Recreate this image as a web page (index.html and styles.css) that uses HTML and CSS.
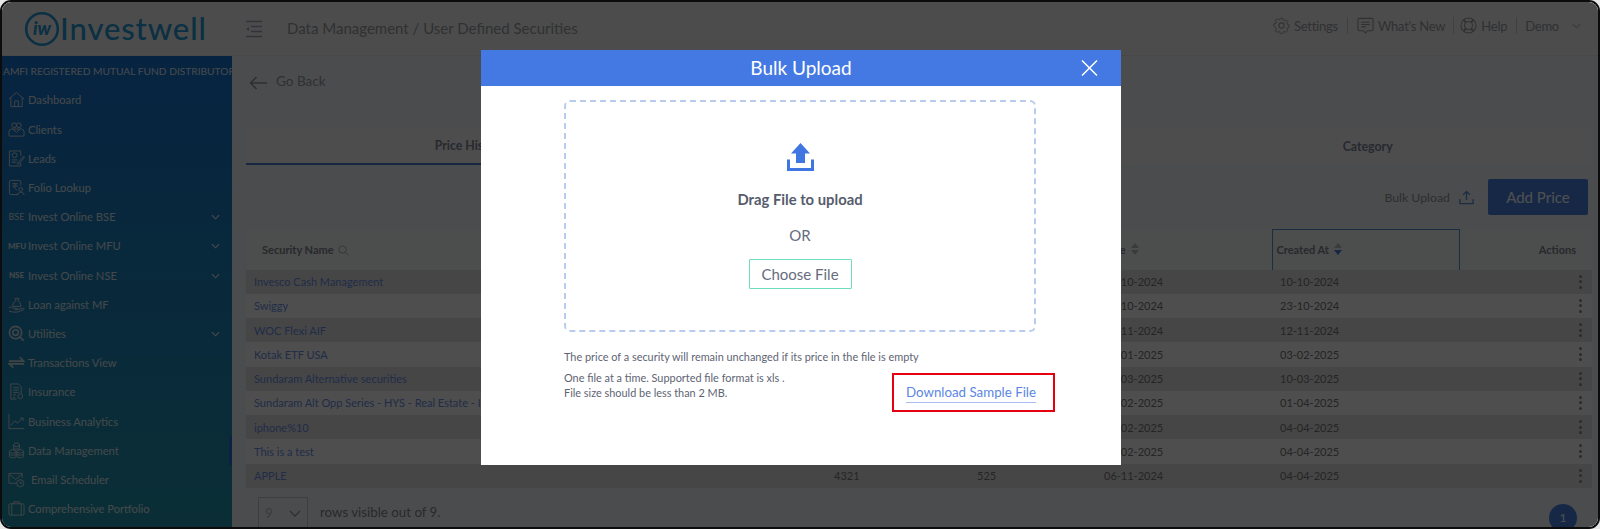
FILE: index.html
```html
<!DOCTYPE html>
<html lang="en">

<head>
    <meta charset="UTF-8">
    <meta name="viewport" content="width=device-width, initial-scale=1.0">
    <title>User Defined Securities</title>
    <link rel="stylesheet" href="styles.css">
</head>

<body>
    <div class="frame">

        <!-- Barra superior -->
        <header class="topbar">
            <div class="logo">
                <svg class="logo-mark" viewBox="0 0 36 36">
                    <circle cx="18" cy="18" r="15.8" fill="none" stroke="currentColor" stroke-width="2.6" />
                    <text x="18" y="23.5" text-anchor="middle" font-size="18" font-weight="900" font-style="italic" fill="currentColor">iw</text>
                </svg>
                <span class="logo-text">Investwell</span>
            </div>
            <svg class="burger" viewBox="0 0 18 18">
                <path d="M1 1.500h16M6 6.500h11M6 11.500h11M1 16.500h16" stroke="currentColor" stroke-width="1.700" fill="none" />
                <path d="M1 9l3-2v4z" fill="currentColor" />
            </svg>
            <div class="crumb">Data Management / User Defined Securities</div>
            <nav class="topnav">
                <a class="topnav-item">
                    <svg class="topnav-icon" viewBox="0 0 18 18" fill="none" stroke="currentColor" stroke-width="1.100">
                        <circle cx="9" cy="9" r="2.800" />
                        <path d="M7.600 1h2.800l.5 2.200 1.500.7 2-1.100 1.900 2-1.100 1.900.6 1.500 2.200.6v2.800l-2.200.6-.6 1.500 1.100 1.900-1.900 2-2-1.100-1.500.7-.5 2.200H7.600l-.5-2.200-1.500-.7-2 1.100-1.900-2 1.100-1.900-.6-1.500L0 10.400V7.600l2.200-.6.6-1.500-1.100-1.900 1.900-2 2 1.100 1.500-.7z" transform="translate(.9 .5) scale(.9)" />
                    </svg>
                    Settings
                </a>
                <a class="topnav-item news">
                    <svg class="topnav-icon" viewBox="0 0 18 18" fill="none" stroke="currentColor" stroke-width="1.200">
                        <path d="M2.500 1.500h13a1.500 1.500 0 0 1 1.500 1.500v10a1.500 1.500 0 0 1-1.500 1.500H11l-2 2.500-2-2.500H2.500A1.500 1.500 0 0 1 1 13V3a1.500 1.500 0 0 1 1.500-1.500z" />
                        <path d="M4.500 5.500h9M4.500 8h9M4.500 10.500h5" />
                    </svg>
                    What's New
                </a>
                <a class="topnav-item help">
                    <svg class="topnav-icon" viewBox="0 0 18 18" fill="none" stroke="currentColor" stroke-width="1.100">
                        <circle cx="9" cy="9" r="8" />
                        <circle cx="9" cy="9" r="4.200" />
                        <path d="M4 3l2.200 2.900M14 3l-2.200 2.900M4 15l2.200-2.900M14 15l-2.200-2.900" stroke-width="2" />
                    </svg>
                    Help
                </a>
                <a class="topnav-item topnav-user">
                    Demo
                    <svg class="topnav-caret" viewBox="0 0 10 6" fill="none" stroke="currentColor" stroke-width="1.100">
                        <path d="M1 1l4 4 4-4" />
                    </svg>
                </a>
            </nav>
        </header>

        <div class="layout">

            <!-- Menu lateral -->
            <aside class="sidebar">
                <div class="amfi">AMFI REGISTERED MUTUAL FUND DISTRIBUTOR</div>
                <ul class="menu">
                    <li class="menu-item">
                        <svg class="menu-icon" viewBox="0 0 18 18"><path d="M1 8.500L9 1.500l8 7M3 7v9.500h12V7M7 16.500V10.500h4v6" /></svg>
                        Dashboard
                    </li>
                    <li class="menu-item">
                        <svg class="menu-icon" viewBox="0 0 18 18"><circle cx="6.500" cy="4.500" r="2.500" /><circle cx="11.500" cy="4.500" r="2.500" /><path d="M1 15v-3.500a3 3 0 0 1 3-3h10a3 3 0 0 1 3 3V15a1 1 0 0 1-1 1H2a1 1 0 0 1-1-1zM5 8.500l4 3.500 4-3.500" /></svg>
                        Clients
                    </li>
                    <li class="menu-item">
                        <svg class="menu-icon" viewBox="0 0 18 18"><path d="M13.500 6V1H1.500v16h12v-3" /><circle cx="7" cy="5.500" r="2.500" /><path d="M4 10.500h6M4 13h5M16.500 6.500L11 13l-1 2 2-.8 5.500-6.500z" /></svg>
                        Leads
                    </li>
                    <li class="menu-item">
                        <svg class="menu-icon" viewBox="0 0 18 18"><path d="M11 16.500H3a1.500 1.500 0 0 1-1.500-1.500V3A1.500 1.500 0 0 1 3 1.500h9A1.500 1.500 0 0 1 13.500 3v4" /><path d="M4.500 5h6M4.500 7.500h6M6 5c3 0 3 3.500 0 3.500l3.500 3.500" /><circle cx="13.500" cy="11" r="2" /><path d="M10 17c0-4 7-4 7 0" /></svg>
                        Folio Lookup
                    </li>
                    <li class="menu-item">
                        <span class="menu-code thin">BSE</span>
                        Invest Online BSE
                        <svg class="menu-caret" viewBox="0 0 10 6"><path d="M1 1l4 4 4-4" /></svg>
                    </li>
                    <li class="menu-item">
                        <span class="menu-code">MFU</span>
                        Invest Online MFU
                        <svg class="menu-caret" viewBox="0 0 10 6"><path d="M1 1l4 4 4-4" /></svg>
                    </li>
                    <li class="menu-item">
                        <span class="menu-code">NSE</span>
                        Invest Online NSE
                        <svg class="menu-caret" viewBox="0 0 10 6"><path d="M1 1l4 4 4-4" /></svg>
                    </li>
                    <li class="menu-item">
                        <svg class="menu-icon" viewBox="0 0 18 18"><path d="M7.500 2.500h4l-1 2.500c2 1 3 3.500 3 6H5c0-2.500 1-5 3.500-6zM1 12.500c2-1.500 3.500-.5 5 .5h3.500c1 0 1 1.500 0 1.500H7M9.500 14.500l6-1.500c1.500-.5 2 1 1 1.500l-6 2.500H5l-4-1" /></svg>
                        Loan against MF
                    </li>
                    <li class="menu-item">
                        <svg class="menu-icon bold" viewBox="0 0 18 18"><circle cx="8" cy="8" r="6.500" /><circle cx="8" cy="8" r="3" /><path d="M12.500 12.500l4 4" /></svg>
                        Utilities
                        <svg class="menu-caret" viewBox="0 0 10 6"><path d="M1 1l4 4 4-4" /></svg>
                    </li>
                    <li class="menu-item">
                        <svg class="menu-icon bold" viewBox="0 0 18 18"><path d="M1 7.500h15.500L12.500 3.500M17 10.500H1.500l4 4" /></svg>
                        Transactions View
                    </li>
                    <li class="menu-item">
                        <svg class="menu-icon" viewBox="0 0 18 18"><path d="M9 17H3V1h8l3 3v7" /><path d="M5.500 5h6M5.500 7.500h6M5.500 10h6M5.500 12.500h3M5.500 15h2" /><circle cx="13" cy="14" r="2.500" /></svg>
                        Insurance
                    </li>
                    <li class="menu-item">
                        <svg class="menu-icon" viewBox="0 0 18 18"><path d="M1 1v15.500h16M3 13l4-4.500 3 2 6-5.500M13 5.500h3v3" /></svg>
                        Business Analytics
                    </li>
                    <li class="menu-item active">
                        <svg class="menu-icon" viewBox="0 0 18 18"><ellipse cx="9" cy="3" rx="3" ry="2" /><path d="M6 3v4.500h6V3" /><ellipse cx="5" cy="10" rx="3.500" ry="1.800" /><path d="M1.500 10v5.500c0 1.500 7 1.500 7 0V10" /><ellipse cx="13" cy="10" rx="3.500" ry="1.800" /><path d="M9.500 10v5.500c0 1.500 7 1.500 7 0V10M1.500 12.800c0 1.500 7 1.500 7 0M9.500 12.800c0 1.500 7 1.500 7 0" /></svg>
                        Data Management
                    </li>
                    <li class="menu-item mail">
                        <svg class="menu-icon" viewBox="0 0 18 18"><path d="M9 13H1V2.500h14V7M1 3l7 6 7-6" /><circle cx="13" cy="13" r="3.800" /><path d="M13 11v2.200h2" /></svg>
                        Email Scheduler
                    </li>
                    <li class="menu-item">
                        <svg class="menu-icon" viewBox="0 0 18 18"><rect x="1" y="4" width="16" height="12" rx="1.500" /><path d="M6 4V2h6v2M4 4v12M14 4v12" /></svg>
                        Comprehensive Portfolio
                    </li>
                </ul>
            </aside>

            <!-- Contenido -->
            <main class="content">
                <a class="back">
                    <svg class="back-arrow" viewBox="0 0 18 14" fill="none" stroke="currentColor" stroke-width="1.500"><path d="M18 7H1.500M7.500 1L1.500 7l6 6" /></svg>
                    Go Back
                </a>

                <div class="tabs">
                    <div class="tab selected">Price History</div>
                    <div class="tab"></div>
                    <div class="tab">Category</div>
                </div>

                <div class="toolbar">
                    <span class="bulk">Bulk Upload</span>
                    <svg class="bulk-icon" viewBox="0 0 16 16" fill="none" stroke="currentColor" stroke-width="1.400"><path d="M8 11V1.500M4.500 5L8 1.500 11.500 5M1 9.500v5h14v-5" /></svg>
                    <button class="add-price">Add Price</button>
                </div>

                <table class="grid">
                    <colgroup>
                        <col class="col-name">
                        <col class="col-price">
                        <col class="col-units">
                        <col class="col-date">
                        <col class="col-created">
                        <col class="col-actions">
                    </colgroup>
                    <tr class="head">
                        <th class="th-name">
                            Security Name
                            <svg class="th-search" viewBox="0 0 12 12" fill="none" stroke="currentColor"><circle cx="5" cy="5" r="4" /><path d="M8 8l3.500 3.500" /></svg>
                        </th>
                        <th></th>
                        <th></th>
                        <th class="th-date"><div class="th-inner">Date <span class="sort"><i class="up"></i><i class="down"></i></span></div></th>
                        <th class="th-created"><div class="th-inner">Created At <span class="sort on"><i class="up"></i><i class="down"></i></span></div></th>
                        <th class="th-actions">Actions</th>
                    </tr>
                    <tr>
                        <td><a>Invesco Cash Management</a></td><td></td><td></td><td>10-10-2024</td><td>10-10-2024</td><td class="dots"><i></i><i></i><i></i></td>
                    </tr>
                    <tr>
                        <td><a>Swiggy</a></td><td></td><td></td><td>23-10-2024</td><td>23-10-2024</td><td class="dots"><i></i><i></i><i></i></td>
                    </tr>
                    <tr>
                        <td><a>WOC Flexi AIF</a></td><td></td><td></td><td>12-11-2024</td><td>12-11-2024</td><td class="dots"><i></i><i></i><i></i></td>
                    </tr>
                    <tr>
                        <td><a>Kotak ETF USA</a></td><td></td><td></td><td>03-01-2025</td><td>03-02-2025</td><td class="dots"><i></i><i></i><i></i></td>
                    </tr>
                    <tr>
                        <td><a>Sundaram Alternative securities</a></td><td></td><td></td><td>10-03-2025</td><td>10-03-2025</td><td class="dots"><i></i><i></i><i></i></td>
                    </tr>
                    <tr>
                        <td><a>Sundaram Alt Opp Series - HYS - Real Estate - IV</a></td><td></td><td></td><td>01-02-2025</td><td>01-04-2025</td><td class="dots"><i></i><i></i><i></i></td>
                    </tr>
                    <tr>
                        <td><a>iphone%10</a></td><td></td><td></td><td>04-02-2025</td><td>04-04-2025</td><td class="dots"><i></i><i></i><i></i></td>
                    </tr>
                    <tr>
                        <td><a>This is a test</a></td><td></td><td></td><td>04-02-2025</td><td>04-04-2025</td><td class="dots"><i></i><i></i><i></i></td>
                    </tr>
                    <tr>
                        <td><a>APPLE</a></td><td>4321</td><td>525</td><td>06-11-2024</td><td>04-04-2025</td><td class="dots"><i></i><i></i><i></i></td>
                    </tr>
                </table>

                <div class="pager">
                    <div class="rows-select">
                        9
                        <svg class="rows-caret" viewBox="0 0 12 7" fill="none" stroke="currentColor" stroke-width="1.300"><path d="M1 1l5 5 5-5" /></svg>
                    </div>
                    <span class="rows-text">rows visible out of 9.</span>
                    <span class="page-dot">1</span>
                </div>
            </main>
        </div>

        <!-- Modal de carga masiva -->
        <div class="overlay">
            <div class="modal">
                <div class="modal-head">
                    Bulk Upload
                    <svg class="modal-close" viewBox="0 0 17 16" fill="none" stroke="currentColor" stroke-width="1.500"><path d="M1 .5l15 15M16 .5l-15 15" /></svg>
                </div>
                <div class="modal-body">
                    <div class="drop">
                        <svg class="drop-icon" viewBox="0 0 27 28">
                            <path d="M13.500 0L23 10.500h-5V20H9v-9.500H4z" fill="#3f76e2" />
                            <path d="M0 16.500h3V25h21v-8.500h3V28H0z" fill="#3f76e2" />
                        </svg>
                        <div class="drop-title">Drag File to upload</div>
                        <div class="drop-or">OR</div>
                        <button class="choose">Choose File</button>
                    </div>
                    <p class="note-first">The price of a security will remain unchanged if its price in the file is empty</p>
                    <div class="note-row">
                        <p class="note">One file at a time. Supported file format is xls .<br>File size should be less than 2 MB.</p>
                        <div class="sample-box"><a class="sample-link">Download Sample File</a></div>
                    </div>
                </div>
            </div>
        </div>
    </div>
</body>

</html>
```

FILE: styles.css
```css
* {
    box-sizing: border-box;
}

html, body {
    height: 100%;
}

body {
    margin: 0;
    overflow: hidden;
    background-color: #e8e8e8;
    font-family: "Lato", "Liberation Sans", sans-serif;
    color: #a5b5c4;
}

p {
    margin: 0;
}

a {
    color: inherit;
}

/* --- marco --- */

.frame {
    position: relative;
    height: 529px;
    overflow: hidden;
    border: 2px solid #0c0c0c;
    border-radius: 11px;
    background-color: #fff;
    display: flex;
    flex-direction: column;
}

.layout {
    flex: 1;
    display: flex;
    min-height: 0;
}

/* --- barra superior --- */

.topbar {
    flex: none;
    height: 54px;
    display: flex;
    align-items: center;
    background-color: #f6f6f6;
    border-bottom: 1px solid #e8e8e8;
}

.logo {
    width: 243px;
    padding-left: 22px;
    display: flex;
    align-items: center;
    color: #249ad8;
}

.logo-mark {
    width: 36px;
    height: 36px;
}

.logo-text {
    font-size: 31px;
    font-weight: 500;
    letter-spacing: .9px;
    line-height: 1;
}

.burger {
    width: 18px;
    height: 18px;
    color: #9aa5b5;
}

.crumb {
    margin-left: 24px;
    margin-top: -1px;
    font-size: 15px;
    color: #999da3;
}

.topnav {
    margin-left: auto;
    padding-right: 17px;
    display: flex;
    align-items: center;
    font-size: 13px;
    letter-spacing: -.25px;
    color: #999da3;
    position: relative;
    top: -3px;
}

.topnav-item {
    display: flex;
    align-items: center;
    gap: 4px;
    padding: 0 9px;
    border-right: 1px solid #cfcfcf;
    line-height: 16px;
}

.topnav-item.news {
    padding-right: 8px;
}

.topnav-item.help {
    padding-left: 6px;
}

.topnav-user {
    border-right: 0;
    gap: 13px;
    padding: 0 0 0 8px;
}

.topnav-icon {
    width: 17px;
    height: 17px;
}

.topnav-caret {
    width: 9px;
    height: 6px;
}

/* --- menu lateral --- */

.sidebar {
    flex: none;
    width: 230px;
    background: linear-gradient(180deg, #1673d0 0%, #2496ad 100%);
    color: #fff;
}

.amfi {
    padding: 7px 0 0 1px;
    height: 29.400px;
    font-size: 10.200px;
    line-height: 16px;
    white-space: nowrap;
    color: #e2edf8;
}

.menu {
    list-style: none;
    margin: 0;
    padding: 0;
}

.menu-item {
    position: relative;
    height: 29.200px;
    display: flex;
    align-items: center;
    gap: 3px;
    padding-left: 6px;
    font-size: 11.200px;
    color: #dfe8ee;
}

.menu-item.active::after {
    content: "";
    position: absolute;
    right: 0;
    top: 0;
    bottom: 0;
    width: 3px;
    background-color: #2a6fd0;
}

.menu-item.mail {
    gap: 6px;
}

.menu-icon {
    flex: none;
    width: 17px;
    height: 17px;
    fill: none;
    stroke: #cfdde4;
    stroke-width: 1;
}

.menu-icon.bold {
    stroke-width: 1.700;
}

.menu-code {
    flex: none;
    width: 17px;
    font-size: 8px;
    font-weight: 900;
    text-align: center;
    white-space: nowrap;
    color: #d6e2e8;
}

.menu-code.thin {
    font-weight: 400;
    font-size: 9px;
}

.menu-caret {
    position: absolute;
    right: 12px;
    top: 12px;
    width: 9px;
    height: 6px;
    fill: none;
    stroke: #e8f0f4;
    stroke-width: 1.200;
}

/* --- contenido --- */

.content {
    flex: 1;
    min-width: 0;
    padding: 0 6px 0 14px;
    background-color: #f3f5f8;
    font-size: 12px;
}

.back {
    height: 50px;
    display: flex;
    align-items: center;
    gap: 9px;
    padding-left: 3px;
    margin-bottom: 21px;
    font-size: 13.500px;
    color: #999da3;
}

.back-arrow {
    width: 18px;
    height: 14px;
    margin-top: 3px;
    color: #8f959b;
}

.tabs {
    display: flex;
    height: 38px;
    background-color: #f7f8fa;
}

.tab {
    flex: 1;
    display: flex;
    align-items: center;
    justify-content: center;
    font-size: 12.300px;
    font-weight: 700;
    color: #7f8794;
}

.tab.selected {
    border-bottom: 2px solid #4f78d8;
}

.toolbar {
    height: 64px;
    display: flex;
    align-items: flex-start;
    justify-content: flex-end;
    padding: 14px 4px 0 0;
    color: #8f969c;
}

.bulk {
    margin-top: 11px;
    font-size: 12.300px;
}

.bulk-icon {
    margin: 11px 14px 0 9px;
    width: 15px;
    height: 15px;
    color: #5b8dd9;
}

.add-price {
    width: 100px;
    height: 36px;
    border: 0;
    border-radius: 2px;
    background-color: #4a82e6;
    color: #fff;
    font-family: inherit;
    font-size: 15px;
}

/* --- tabla --- */

.grid {
    width: 100%;
    table-layout: fixed;
    border-collapse: collapse;
}

.col-name { width: 580px; }
.col-price { width: 143px; }
.col-units { width: 127px; }
.col-date { width: 176px; }
.col-created { width: 187px; }

.grid tr {
    height: 24.250px;
}

.grid tr:nth-child(even) {
    background-color: #e2e2e2;
}

.grid tr:nth-child(odd) {
    background-color: #fbfbfb;
}

.grid tr.head {
    height: 40px;
    background-color: #f6f7f9;
}

.grid th {
    padding: 0 0 1px;
    text-align: left;
    font-size: 11px;
    font-weight: 700;
    color: #7f8690;
}

.grid td {
    padding: 0 0 0 8px;
    font-size: 11px;
    line-height: 15px;
    color: #777;
    white-space: nowrap;
    overflow: hidden;
}

.grid td a {
    color: #6a90e8;
}

.th-inner {
    display: flex;
    align-items: center;
    gap: 5px;
}

.th-name {
    padding-left: 16px !important;
}

.th-search {
    width: 11px;
    height: 11px;
    margin-left: 2px;
    vertical-align: -2px;
    color: #a3a9ad;
}

.th-date {
    padding-left: 6px !important;
}

.th-created {
    padding-left: 4px !important;
    border: 1px solid #5b8dd9;
    border-bottom: 0;
}

.th-actions {
    text-align: right !important;
    padding-right: 16px !important;
}

.sort {
    display: inline-flex;
    flex-direction: column;
    gap: 2px;
}

.sort i {
    width: 0;
    height: 0;
    border-left: 4px solid transparent;
    border-right: 4px solid transparent;
}

.sort .up {
    border-bottom: 5px solid #b9bec4;
}

.sort .down {
    border-top: 5px solid #b9bec4;
}

.sort.on .down {
    border-top-color: #4f78d8;
}

.dots {
    text-align: right;
    padding-right: 10px !important;
}

.dots i {
    display: block;
    width: 3px;
    height: 3px;
    margin: 0 0 2.500px auto;
    border-radius: 50%;
    background-color: #8a8a8a;
}

.dots i:last-child {
    margin-bottom: 0;
}

/* --- paginacion --- */

.pager {
    position: relative;
    display: flex;
    align-items: center;
    gap: 12px;
    padding: 9px 0 0 12px;
    font-size: 13.300px;
    color: #888;
}

.rows-select {
    width: 50px;
    height: 33px;
    flex: none;
    display: flex;
    align-items: center;
    justify-content: space-between;
    padding: 0 6px;
    border: 1px solid #c9c9c9;
    color: #bbb;
}

.rows-text {
    margin-top: -3px;
}

.rows-caret {
    width: 12px;
    height: 7px;
    color: #999;
}

.page-dot {
    position: absolute;
    right: 15px;
    top: 16px;
    width: 28px;
    height: 28px;
    border-radius: 50%;
    background-color: #4a82e6;
    color: #fff;
    font-size: 12px;
    text-align: center;
    line-height: 28px;
}

/* --- modal --- */

.overlay {
    position: absolute;
    inset: 0;
    background-color: rgba(0, 0, 0, .69);
    display: flex;
    justify-content: center;
    align-items: flex-start;
    padding: 48px 0 0 2px;
}

.modal {
    width: 640px;
    height: 415px;
    background-color: #fff;
}

.modal-head {
    position: relative;
    height: 36px;
    background-color: #4479e3;
    color: #fff;
    font-size: 19px;
    line-height: 36px;
    text-align: center;
}

.modal-close {
    position: absolute;
    right: 23px;
    top: 10px;
    width: 17px;
    height: 16px;
}

.modal-body {
    padding: 14px 66px 0 83px;
}

.drop {
    width: 472px;
    height: 232px;
    border: 2px dashed #b9cbef;
    border-radius: 6px;
    padding-top: 41px;
    display: flex;
    flex-direction: column;
    align-items: center;
}

.drop-icon {
    width: 27px;
    height: 28px;
}

.drop-title {
    margin-top: 19px;
    font-size: 14.800px;
    line-height: 18px;
    font-weight: 700;
    color: #565c6c;
}

.drop-or {
    margin-top: 18px;
    font-size: 15px;
    line-height: 18px;
    color: #666c7e;
}

.choose {
    margin-top: 15px;
    width: 103px;
    height: 30px;
    padding: 0;
    border: 1px solid #6fdcbd;
    border-radius: 1px;
    background-color: #fff;
    font-family: inherit;
    font-size: 15px;
    color: #666c7e;
}

.note-first,
.note {
    font-size: 10.900px;
    line-height: 15px;
    color: #5e6473;
}

.note-first {
    margin-top: 17px;
}

.note-row {
    display: flex;
    align-items: flex-start;
    justify-content: space-between;
    margin-top: 1px;
}

.note {
    padding-top: 5px;
}

.sample-box {
    width: 163px;
    height: 39px;
    margin-top: 8px;
    border: 2px solid #e4000f;
    padding: 6px 0 0 12px;
}

.sample-link {
    display: inline-block;
    font-size: 13.300px;
    line-height: 17px;
    padding-bottom: 1px;
    border-bottom: 1px solid #a9bdf1;
    color: #5a86e4;
}
```
